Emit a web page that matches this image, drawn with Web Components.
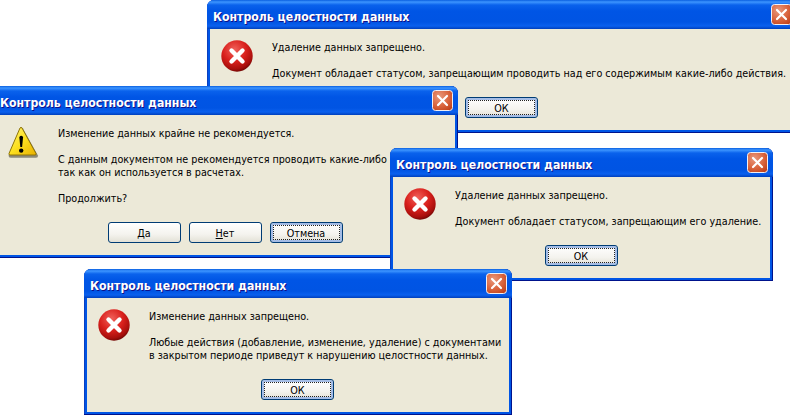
<!DOCTYPE html>
<html lang="ru">
<head>
<meta charset="utf-8">
<title>Контроль целостности данных</title>
<style>
  html, body { margin: 0; height: 100%; background: #fff; overflow: hidden; }
  body { position: relative; width: 790px; height: 415px; }
</style>
</head>
<body>
<xp-window title="Контроль целостности данных" style="left:207px;top:0;width:590px">
  <xp-icon slot="icon" kind="error"></xp-icon>
  <xp-line>Удаление данных запрещено.</xp-line>
  <xp-line></xp-line>
  <xp-line>Документ обладает статусом, запрещающим проводить над его содержимым какие-либо действия.</xp-line>
  <xp-button slot="buttons" focused>ОК</xp-button>
</xp-window>

<xp-window title="Контроль целостности данных" style="left:-6px;top:86px;width:464px;--client-left:10px">
  <xp-icon slot="icon" kind="warning"></xp-icon>
  <xp-line>Изменение данных крайне не рекомендуется.</xp-line>
  <xp-line></xp-line>
  <xp-line>С данным документом не рекомендуется проводить какие-либо</xp-line>
  <xp-line>так как он используется в расчетах.</xp-line>
  <xp-line></xp-line>
  <xp-line>Продолжить?</xp-line>
  <xp-button slot="buttons"><u>Д</u>а</xp-button>
  <xp-button slot="buttons"><u>Н</u>ет</xp-button>
  <xp-button slot="buttons" focused>Отмена</xp-button>
</xp-window>

<xp-window title="Контроль целостности данных" style="left:390px;top:148px;width:383px">
  <xp-icon slot="icon" kind="error"></xp-icon>
  <xp-line>Удаление данных запрещено.</xp-line>
  <xp-line></xp-line>
  <xp-line>Документ обладает статусом, запрещающим его удаление.</xp-line>
  <xp-button slot="buttons" focused>ОК</xp-button>
</xp-window>

<xp-window title="Контроль целостности данных" style="left:84px;top:269px;width:428px">
  <xp-icon slot="icon" kind="error"></xp-icon>
  <xp-line>Изменение данных запрещено.</xp-line>
  <xp-line></xp-line>
  <xp-line>Любые действия (добавление, изменение, удаление) с документами</xp-line>
  <xp-line>в закрытом периоде приведут к нарушению целостности данных.</xp-line>
  <xp-button slot="buttons" focused>ОК</xp-button>
</xp-window>

<script>
class XpWindow extends HTMLElement {
  connectedCallback() {
    this.attachShadow({ mode: 'open' });
    this.shadowRoot.innerHTML = `
      <style>
        :host {
          position: absolute;
          display: flex;
          flex-direction: column;
          box-sizing: border-box;
          border-radius: 7px 7px 0 0;
          background: #0055e5;
          padding: 0 3px 3px;
          box-shadow: inset 0 -1px 0 #00138c, inset 1px 0 0 #0a3fc0, inset -1px 0 0 #00138c;
          font: 10.7px/13px "DejaVu Sans Condensed", "DejaVu Sans", sans-serif;
          color: #000;
        }
        .title {
          height: 29px;
          box-sizing: border-box;
          margin: 0 -3px;
          padding: 0 5px 0 6px;
          display: flex;
          align-items: center;
          justify-content: space-between;
          border-radius: 7px 7px 0 0;
          background: linear-gradient(#0a5fe0 0, #3d95ff 2px, #0a62ec 5px, #0055e5 11px, #0054e3 22px, #0a60ee 26px, #003fbc 29px);
          color: #fff;
          font-weight: bold;
          font-size: 12.2px;
          text-shadow: 1px 1px 0 #0f1089;
        }
        .title span { padding-top: 6px; }
        .close {
          width: 21px;
          height: 21px;
          flex: none;
        }
        .client {
          background: #ece9d8;
          padding: 11px 12px 12px var(--client-left, 11px);
          display: flex;
          flex-direction: column;
          gap: 17px;
        }
        .body { display: flex; gap: 19px; }
        .msg { padding-top: 1px; white-space: nowrap; min-height: 13px; }
        .buttons { display: flex; justify-content: center; gap: 8px; }
      </style>
      <div class="title">
        <span>${this.getAttribute('title')}</span>
        <svg class="close" viewBox="0 0 21 21">
          <defs>
            <radialGradient id="cl" cx=".35" cy=".3" r=".9">
              <stop offset="0" stop-color="#e8987c"/>
              <stop offset=".55" stop-color="#d9633c"/>
              <stop offset="1" stop-color="#bb3a14"/>
            </radialGradient>
          </defs>
          <rect x=".5" y=".5" width="20" height="20" rx="3" fill="url(#cl)" stroke="#fff" stroke-opacity=".9"/>
          <path d="M6 6l9 9M15 6l-9 9" stroke="#fff" stroke-width="2.2" stroke-linecap="round"/>
        </svg>
      </div>
      <div class="client">
        <div class="body">
          <slot name="icon"></slot>
          <div class="msg"><slot></slot></div>
        </div>
        <div class="buttons"><slot name="buttons"></slot></div>
      </div>
    `;
  }
}

class XpLine extends HTMLElement {
  connectedCallback() {
    this.attachShadow({ mode: 'open' });
    this.shadowRoot.innerHTML = `
      <style>:host { display: block; height: 13px; }</style>
      <slot></slot>
    `;
  }
}

class XpButton extends HTMLElement {
  connectedCallback() {
    this.attachShadow({ mode: 'open' });
    this.shadowRoot.innerHTML = `
      <style>
        :host {
          display: block;
          box-sizing: border-box;
          width: 73px;
          height: 21px;
          border: 1px solid #003c74;
          border-radius: 3px;
          background: linear-gradient(#fff, #f4f3ee 60%, #e3e1d6);
          color: #000;
        }
        :host([focused]) {
          box-shadow: inset 0 0 0 2px #a5bde6;
        }
        .face {
          height: 100%;
          box-sizing: border-box;
          padding-top: 2px;
          display: flex;
          align-items: center;
          justify-content: center;
        }
        :host([focused]) .face { outline: 1px dotted #222; outline-offset: -3px; }
      </style>
      <div class="face"><slot></slot></div>
    `;
  }
}

let iconId = 0;
class XpIcon extends HTMLElement {
  connectedCallback() {
    const id = 'i' + (++iconId);
    this.attachShadow({ mode: 'open' });
    const error = `
      <defs>
        <radialGradient id="${id}" cx=".42" cy=".3" r=".75">
          <stop offset="0" stop-color="#f0615a"/>
          <stop offset=".5" stop-color="#d9201c"/>
          <stop offset=".82" stop-color="#a80f0c"/>
          <stop offset="1" stop-color="#5d0402"/>
        </radialGradient>
      </defs>
      <circle cx="16" cy="16" r="15.7" fill="url(#${id})"/>
      <path d="M10.5 10.5l11 11M21.5 10.5l-11 11" stroke="#fff" stroke-width="4.4" stroke-linecap="round"/>`;
    const warning = `
      <defs>
        <linearGradient id="${id}" x1="0" y1="0" x2="1" y2="1">
          <stop offset="0" stop-color="#fff47a"/>
          <stop offset=".5" stop-color="#fde01f"/>
          <stop offset="1" stop-color="#e8b000"/>
        </linearGradient>
      </defs>
      <path d="M15 1.5L30 28.5Q30.5 31 28 31H3Q.5 31 1 28.5L13 1.5Q14 0 15 1.5Z" fill="#4c4a38" opacity=".6" transform="translate(.8 .8)"/>
      <path d="M15 2L29 27.5Q29.5 29 28 29H3Q1.5 29 2 27.5L13 2Q14 .6 15 2Z" fill="url(#${id})" stroke="#8e7408"/>
      <path d="M12.3 11Q14.2 8.6 16.1 11L15.1 21H13.3Z" fill="#000"/>
      <circle cx="14.2" cy="24.6" r="2.2" fill="#000"/>`;
    this.shadowRoot.innerHTML = `
      <style>
        :host { display: block; width: 32px; height: 32px; flex: none; }
        svg { display: block; }
      </style>
      <svg width="32" height="32" viewBox="0 0 32 32">${this.getAttribute('kind') === 'warning' ? warning : error}</svg>
    `;
  }
}

customElements.define('xp-window', XpWindow);
customElements.define('xp-line', XpLine);
customElements.define('xp-button', XpButton);
customElements.define('xp-icon', XpIcon);
</script>
</body>
</html>
